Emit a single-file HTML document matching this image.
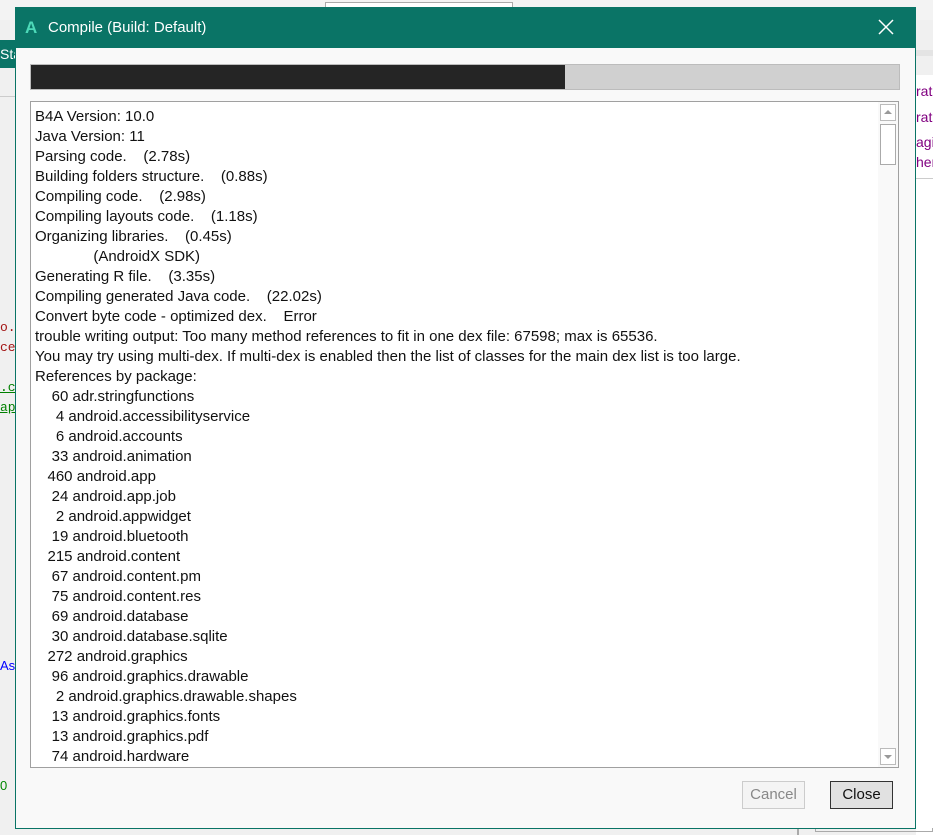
<!DOCTYPE html>
<html><head><meta charset="utf-8"><style>
*{margin:0;padding:0;box-sizing:border-box}
body{width:933px;height:835px;background:#f0f0f0;position:relative;overflow:hidden;font-family:"Liberation Sans",sans-serif}
.abs{position:absolute}
.dlg{left:15px;top:7px;width:901px;height:822px;background:#f9f9f9;border:1px solid #0a7466}
.title{left:15px;top:7px;width:901px;height:41px;background:#0a7466;color:#fff;font-size:15px}
.box{left:30px;top:101px;width:869px;height:667px;background:#fff;border:1px solid #a0a0a0;overflow:hidden}
.lines{position:absolute;left:0;top:2px}
.ln{position:absolute;left:4px;font-size:15px;color:#111;white-space:pre;height:20px;line-height:20px}
.btn{height:28px;font-size:15px;text-align:center;line-height:26px}
</style></head><body>
<div class="abs" style="left:0;top:0;width:933px;height:20px;background:#f3f3f3"></div>
<div class="abs" style="left:325px;top:2px;width:188px;height:6px;border:1px solid #aaa;border-bottom:none;background:#fff"></div>
<div class="abs" style="left:0;top:40px;width:16px;height:28px;background:#0a7466;color:#fff;font-size:14px;line-height:28px">Sta</div>
<div class="abs" style="left:0;top:96px;width:16px;height:1px;background:#ccc"></div>
<div class="abs" style="left:0;top:318px;font-family:'Liberation Mono';font-size:13px;color:#a31515;line-height:20px">o.c<br>ces</div>
<div class="abs" style="left:0;top:378px;font-family:'Liberation Mono';font-size:13px;color:#008000;text-decoration:underline;line-height:20px">.co<br>api</div>
<div class="abs" style="left:0;top:658px;font-size:13px;color:#00f">As</div>
<div class="abs" style="left:0;top:778px;font-size:13px;color:#080">0</div>
<div class="abs" style="left:916px;top:75px;width:17px;height:760px;background:#fff"></div>
<div class="abs" style="left:916px;top:78px;font-size:14px;color:#800080;line-height:26px">rat<br>rat</div>
<div class="abs" style="left:916px;top:132px;font-size:14px;color:#800080;line-height:20px">agi<br>her</div>
<div class="abs" style="left:916px;top:50px;width:17px;height:6px;background:#e4e4e4"></div>
<div class="abs" style="left:916px;top:178px;width:17px;height:1px;background:#ccc"></div>
<div class="abs" style="left:797px;top:828px;width:2px;height:7px;background:#aaa"></div>
<div class="abs" style="left:815px;top:828px;width:118px;height:4px;border:1px solid #aaa;border-top:none"></div>

<div class="abs dlg"></div>
<div class="abs title">
 <span class="abs" style="left:10px;top:11px;color:#4dd9b8;font-weight:bold;font-size:17px">A</span>
 <span class="abs" style="left:33px;top:12px">Compile (Build: Default)</span>
 <svg class="abs" style="left:863px;top:12px" width="16" height="16"><path d="M1 1L15 15M15 1L1 15" stroke="#fff" stroke-width="1.5"/></svg>
</div>
<div class="abs" style="left:30px;top:64px;width:870px;height:26px;background:#d0d0d0;border:1px solid #bcbcbc"></div>
<div class="abs" style="left:31px;top:65px;width:534px;height:24px;background:#252525"></div>
<div class="abs box"><div class="lines">
<div class="ln" style="top:3px">B4A Version: 10.0</div>
<div class="ln" style="top:23px">Java Version: 11</div>
<div class="ln" style="top:43px">Parsing code.    (2.78s)</div>
<div class="ln" style="top:63px">Building folders structure.    (0.88s)</div>
<div class="ln" style="top:83px">Compiling code.    (2.98s)</div>
<div class="ln" style="top:103px">Compiling layouts code.    (1.18s)</div>
<div class="ln" style="top:123px">Organizing libraries.    (0.45s)</div>
<div class="ln" style="top:143px">              (AndroidX SDK)</div>
<div class="ln" style="top:163px">Generating R file.    (3.35s)</div>
<div class="ln" style="top:183px">Compiling generated Java code.    (22.02s)</div>
<div class="ln" style="top:203px">Convert byte code - optimized dex.    Error</div>
<div class="ln" style="top:223px">trouble writing output: Too many method references to fit in one dex file: 67598; max is 65536.</div>
<div class="ln" style="top:243px">You may try using multi-dex. If multi-dex is enabled then the list of classes for the main dex list is too large.</div>
<div class="ln" style="top:263px">References by package:</div>
<div class="ln" style="top:283px">    60 adr.stringfunctions</div>
<div class="ln" style="top:303px">     4 android.accessibilityservice</div>
<div class="ln" style="top:323px">     6 android.accounts</div>
<div class="ln" style="top:343px">    33 android.animation</div>
<div class="ln" style="top:363px">   460 android.app</div>
<div class="ln" style="top:383px">    24 android.app.job</div>
<div class="ln" style="top:403px">     2 android.appwidget</div>
<div class="ln" style="top:423px">    19 android.bluetooth</div>
<div class="ln" style="top:443px">   215 android.content</div>
<div class="ln" style="top:463px">    67 android.content.pm</div>
<div class="ln" style="top:483px">    75 android.content.res</div>
<div class="ln" style="top:503px">    69 android.database</div>
<div class="ln" style="top:523px">    30 android.database.sqlite</div>
<div class="ln" style="top:543px">   272 android.graphics</div>
<div class="ln" style="top:563px">    96 android.graphics.drawable</div>
<div class="ln" style="top:583px">     2 android.graphics.drawable.shapes</div>
<div class="ln" style="top:603px">    13 android.graphics.fonts</div>
<div class="ln" style="top:623px">    13 android.graphics.pdf</div>
<div class="ln" style="top:643px">    74 android.hardware</div>
</div>
<div class="abs" style="left:847px;top:0;width:20px;height:665px;background:#f9f9f9"></div>
<div class="abs" style="left:849px;top:2px;width:16px;height:17px;border:1px solid #bbb;background:#fff"><svg width="14" height="15"><path d="M3 9L7 5L11 9Z" fill="#999"/></svg></div>
<div class="abs" style="left:849px;top:22px;width:16px;height:41px;border:1px solid #aaa;background:#fff"></div>
<div class="abs" style="left:849px;top:646px;width:16px;height:17px;border:1px solid #bbb;background:#fff"><svg width="14" height="15"><path d="M3 6L7 10L11 6Z" fill="#999"/></svg></div>
</div>
<div class="abs btn" style="left:742px;top:781px;width:63px;border:1px solid #ccc;background:#f4f4f4;color:#888">Cancel</div>
<div class="abs btn" style="left:830px;top:781px;width:63px;border:1px solid #333;background:#e1e1e1;color:#111">Close</div>
</body></html>
